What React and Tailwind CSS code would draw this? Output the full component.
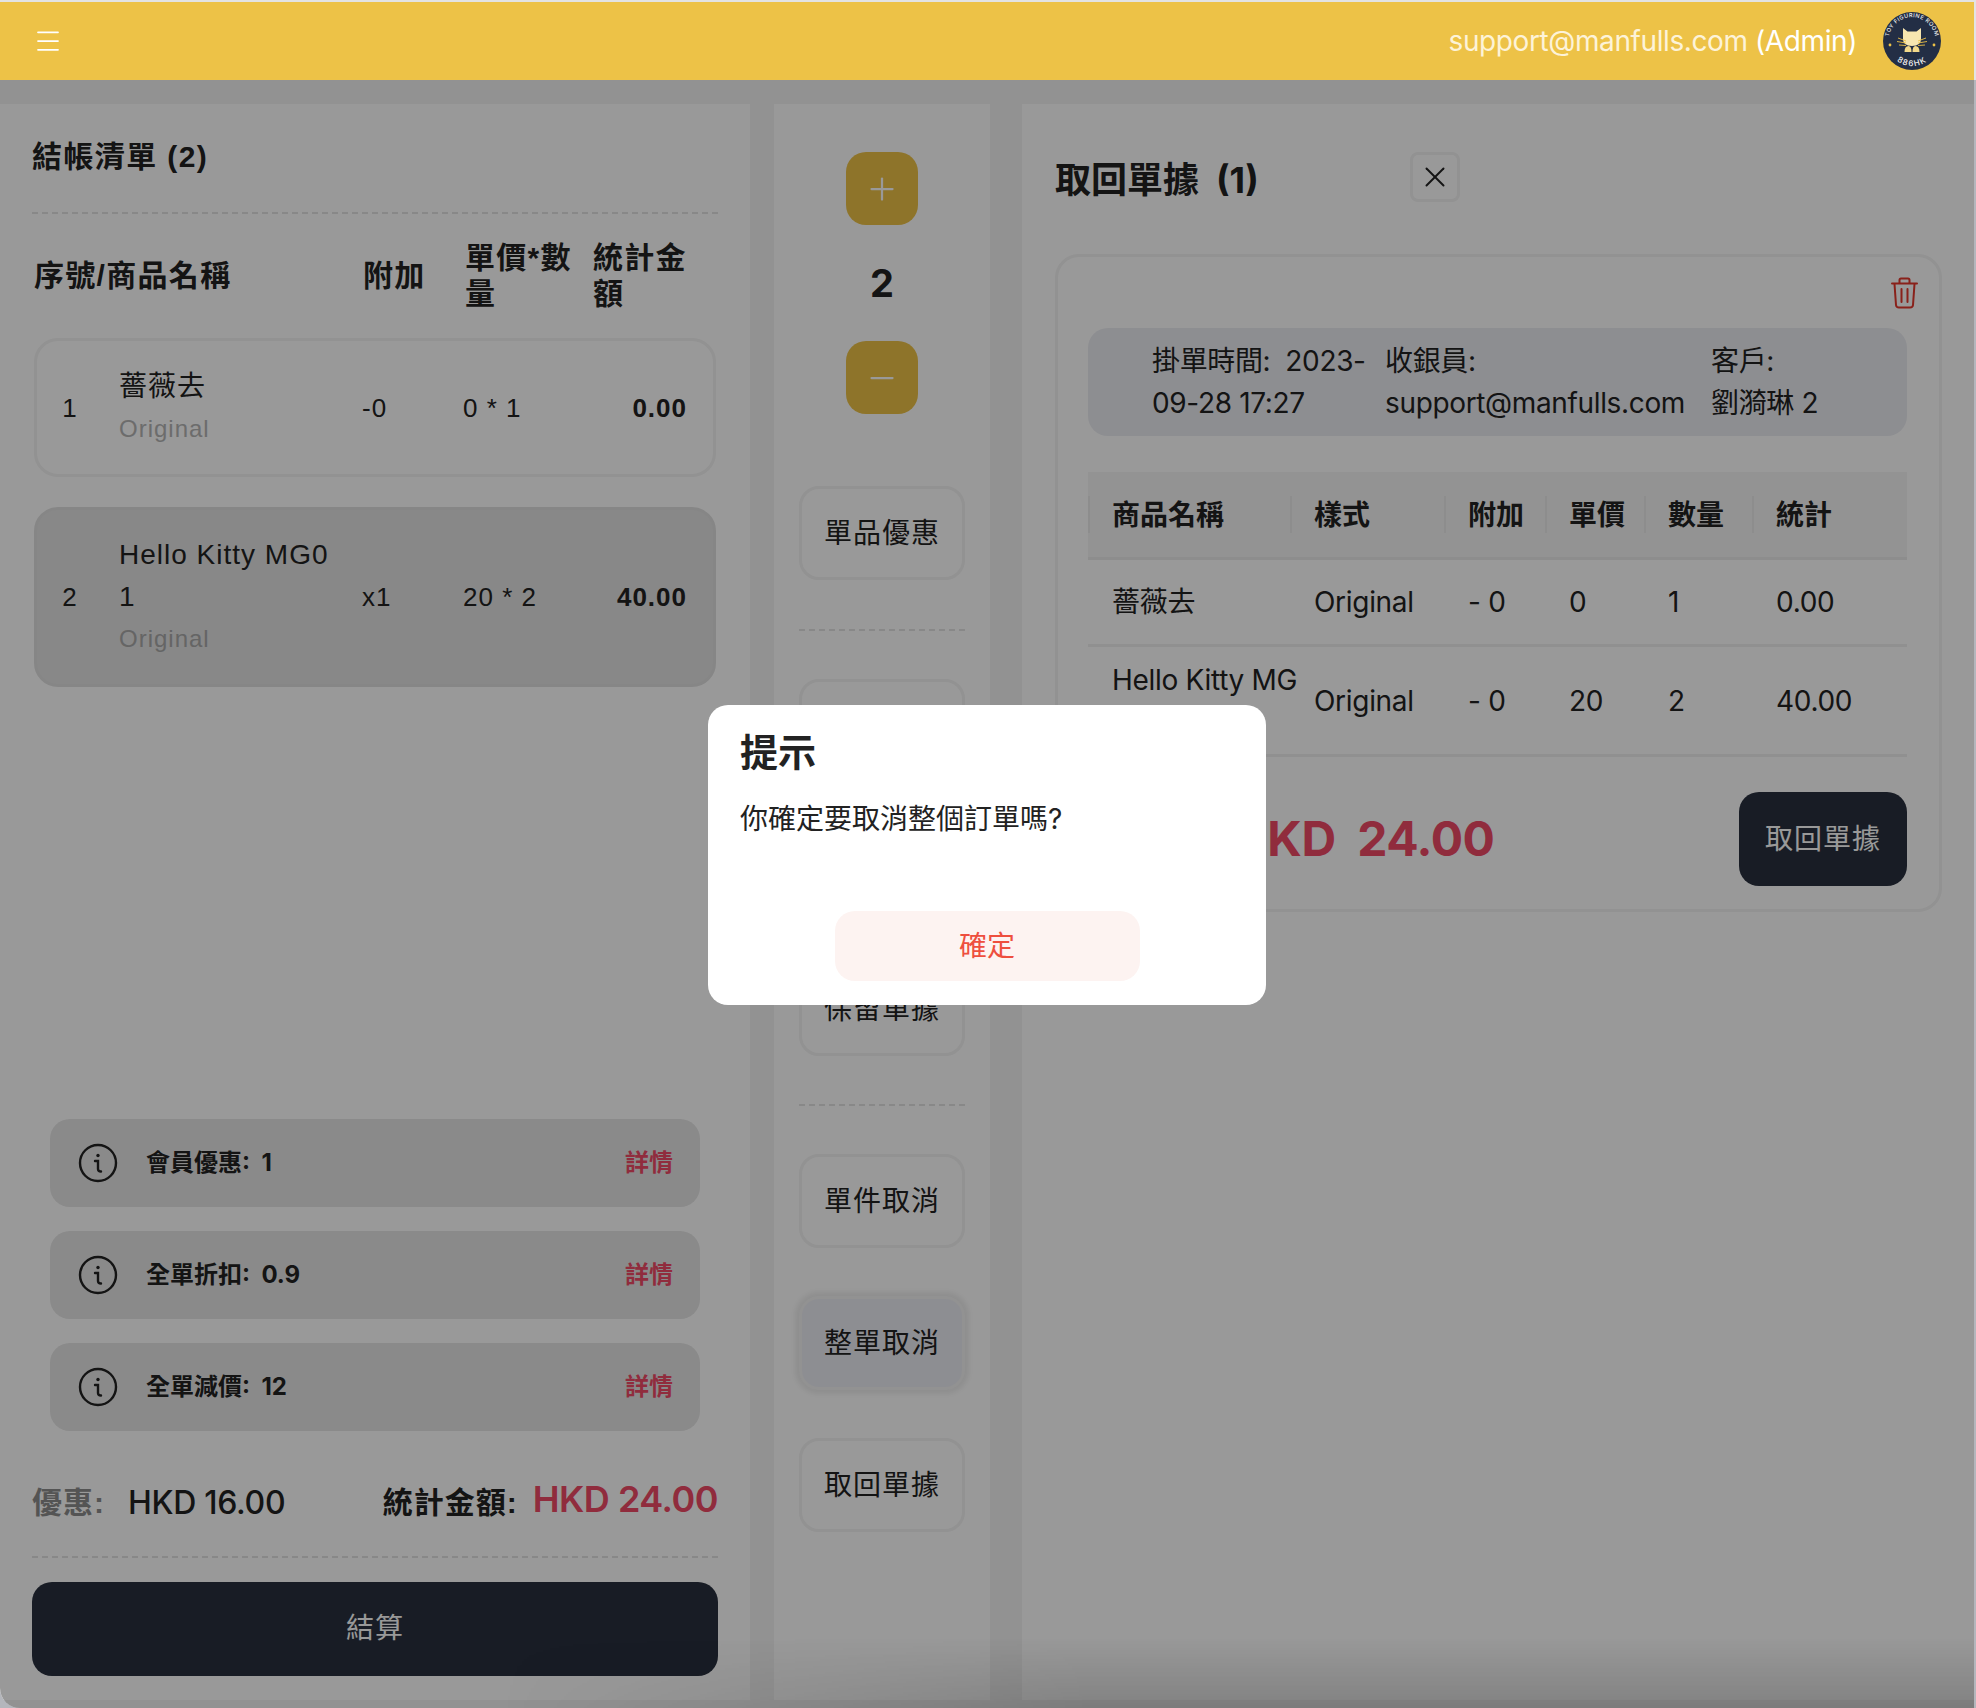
import React from 'react';
import { Menu, X, Plus, Minus } from 'lucide-react';

const sideBtn = 'w-[166px] h-[94px] rounded-[20px] border-[3px] border-[#f3f3f3] flex items-center justify-center text-[28px] tracking-[1px] text-[#222]';

const Dashed = ({ className }) => <div className={`border-t-2 border-dashed border-[#e3e3e3] ${className}`}></div>;

const Logo = () => (
    <svg width="60" height="60" viewBox="0 0 60 60">
        <defs>
            <path id="topArc" d="M7.5 37 A23.6 23.6 0 1 1 52.5 37" />
            <path id="botArc" d="M8 42 A25 25 0 0 0 52 42" />
        </defs>
        <circle cx="30" cy="30" r="29" fill="#232e45" />
        <text fontSize="5.6" fill="#f0f0f0" fontFamily="Inter, sans-serif" fontWeight="500" letterSpacing="0.45">
            <textPath href="#topArc" startOffset="50%" textAnchor="middle">TOY FIGURINE ROOM</textPath>
        </text>
        <text fontSize="8" fill="#f0f0f0" fontFamily="Inter, sans-serif" fontWeight="500" letterSpacing="1.2">
            <textPath href="#botArc" startOffset="50%" textAnchor="middle">886HK</textPath>
        </text>
        <circle cx="8" cy="34" r="1.4" fill="#edc247" />
        <circle cx="52" cy="34" r="1.4" fill="#edc247" />
        <path d="M21 17 L25.5 20.5 L34.5 20.5 L39 17 L39 28 Q39 35 30 35 Q21 35 21 28 Z" fill="#f7e6b0" />
        <path d="M22.5 41 Q22.5 35 26.5 35 Q29.5 35 29.5 41 Z M37.5 41 Q37.5 35 33.5 35 Q30.5 35 30.5 41 Z" fill="#f3d98a" />
        <path d="M16 27 L24 30 M15 30.5 L24 32 M17 34 L24 34.5 M44 27 L36 30 M45 30.5 L36 32 M43 34 L36 34.5" stroke="#edc247" strokeWidth="0.9" fill="none" />
    </svg>
);

const InfoIcon = () => (
    <svg width="40" height="40" viewBox="0 0 40 40" fill="none" stroke="#222" strokeWidth="2.4">
        <circle cx="20" cy="20" r="18" />
        <circle cx="20" cy="12.5" r="1.7" fill="#222" stroke="none" />
        <path d="M17 18 H20 V26 Q20 28.5 23 28.5" strokeLinecap="round" />
    </svg>
);

const TrashIcon = () => (
    <svg width="27" height="32" viewBox="0 0 27 32" fill="none" stroke="#e5372c" strokeWidth="2" strokeLinecap="round">
        <path d="M1 6.5 H26" />
        <path d="M8.5 6 V3 Q8.5 1.5 10 1.5 H17 Q18.5 1.5 18.5 3 V6" />
        <path d="M3.5 7 L5 28 Q5.2 30.5 8 30.5 H19 Q21.8 30.5 22 28 L23.5 7" />
        <path d="M10.5 12 V25 M16.5 12 V25" />
    </svg>
);

const Discount = ({ label }) => (
    <div className="h-[88px] rounded-[20px] bg-[#e6e6e6] flex items-center pl-[28px] pr-[27px] font-['Inter','Noto_Sans_CJK_TC',sans-serif]">
        <InfoIcon />
        <span className="ml-[28px] text-[24px] font-bold text-[#222] whitespace-pre">{label}</span>
        <span className="ml-auto text-[24px] font-bold text-[#f04a66]">詳情</span>
    </div>
);

const columns = 'grid grid-cols-[72px_253px_101px_132px_1fr]';
const tableCols = 'grid grid-cols-[202px_154px_101px_99px_108px_1fr]';

export default function App() {
    return (
        <div className="w-[1976px] h-[1708px] relative overflow-hidden bg-[#b4b6bc] font-['Inter','Noto_Sans_CJK_TC',sans-serif]">
            <div className="w-[1974px] h-[1708px] rounded-bl-[20px] overflow-hidden bg-[#f3f3f3] flex flex-col">
                <div className="h-[80px] shrink-0"></div>

                <div className="flex-1 flex pt-[24px] pb-[8px] min-h-0">
                    {/* Left: checkout list */}
                    <div className="w-[750px] shrink-0 bg-white px-[32px] flex flex-col tracking-[1px] font-['Liberation_Sans','Noto_Sans_CJK_TC',sans-serif]">
                        <h2 className="h-[106px] pb-[1px] flex items-center text-[30px] font-bold tracking-[1.4px] text-[#222]">結帳清單 (2)</h2>
                        <div className="h-[2px]"></div>
                        <Dashed />
                        <div className="grid grid-cols-[329px_102px_128px_1fr] mx-[2px] h-[124px] items-center text-[30px] leading-[36px] font-bold tracking-[1.3px] text-[#222]">
                            <div className="whitespace-nowrap">序號/商品名稱</div>
                            <div>附加</div>
                            <div className="pr-[14px]">單價*數量</div>
                            <div className="pr-[18px]">統計金額</div>
                        </div>
                        <div className={`${columns} mx-[2px] h-[139px] items-center rounded-[24px] border-[3px] border-[#f3f3f3] text-[#222] text-[26px] leading-[42px]`}>
                            <div className="text-center pr-[6px]">1</div>
                            <div className="pl-[10px]">
                                <div className="text-[28px] pt-[1px]">薔薇去</div>
                                <div className="text-[24px] text-[#b5b5b5]">Original</div>
                            </div>
                            <div>-0</div>
                            <div>0 * 1</div>
                            <div className="text-right pr-[26px] font-bold">0.00</div>
                        </div>
                        <div className={`${columns} mx-[2px] mt-[30px] h-[180px] items-center rounded-[24px] border-[3px] border-[#e0e0e0] bg-[#e3e3e3] text-[#222] text-[26px] leading-[42px]`}>
                            <div className="text-center pr-[6px]">2</div>
                            <div className="pl-[10px]">
                                <div className="w-[216px] break-all text-[28px]">Hello Kitty MG01</div>
                                <div className="text-[24px] text-[#a8a8a8]">Original</div>
                            </div>
                            <div>x1</div>
                            <div>20 * 2</div>
                            <div className="text-right pr-[26px] font-bold">40.00</div>
                        </div>

                        <div className="mt-auto mx-[18px] flex flex-col gap-[24px] tracking-normal">
                            <Discount label="會員優惠:  1" />
                            <Discount label="全單折扣:  0.9" />
                            <Discount label="全單減價:  12" />
                        </div>
                        <div className="h-[125px] pt-[18px] flex items-center text-[#222]">
                            <span className="text-[30px] font-bold text-[#8c8c8c] w-[96px]">優惠:</span>
                            <span className="text-[32px] font-medium tracking-[-0.3px] font-['Inter',sans-serif]">HKD 16.00</span>
                            <span className="ml-auto text-[30px] font-bold">統計金額:</span>
                            <span className="ml-[15px] mb-[8px] text-[36px] font-semibold tracking-[-0.5px] text-[#f04a66] font-['Inter',sans-serif]">HKD 24.00</span>
                        </div>
                        <Dashed />
                        <button className="mt-[24px] mb-[24px] h-[94px] rounded-[20px] bg-[#282f3e] text-[28px] text-white">結算</button>
                    </div>

                    {/* Middle: actions */}
                    <div className="w-[216px] shrink-0 ml-[24px] bg-white flex flex-col items-center pt-[48px]">
                        <button className="w-[72px] h-[73px] rounded-[20px] bg-[#edc247] flex items-center justify-center">
                            <Plus size={36} strokeWidth={1.5} className="text-white" />
                        </button>
                        <div className="h-[116px] flex items-center text-[38px] font-bold text-[#222]">2</div>
                        <button className="w-[72px] h-[73px] rounded-[20px] bg-[#edc247] flex items-center justify-center">
                            <Minus size={36} strokeWidth={1.5} className="text-white" />
                        </button>
                        <button className={`${sideBtn} mt-[72px]`}>單品優惠</button>
                        <Dashed className="w-[166px] mt-[49px]" />
                        <button className={`${sideBtn} mt-[48px]`}></button>
                        <button className={`${sideBtn} mt-[48px]`}></button>
                        <button className={`${sideBtn} mt-[47px]`}>保留單據</button>
                        <Dashed className="w-[166px] mt-[48px]" />
                        <button className={`${sideBtn} mt-[48px]`}>單件取消</button>
                        <button className={`${sideBtn} mt-[48px] bg-[#ecedf3] border-[#ecedf3] shadow-[0_0_5px_4px_#eeeeee]`}>整單取消</button>
                        <button className={`${sideBtn} mt-[48px]`}>取回單據</button>
                    </div>

                    {/* Right: retrieve orders */}
                    <div className="flex-1 min-w-0 ml-[32px] bg-white pl-[33px]">
                        <div className="h-[150px] flex items-center">
                            <h2 className="w-[355px] mt-[2px] text-[36px] font-bold text-[#222] whitespace-pre">取回單據  (1)</h2>
                            <button className="w-[50px] h-[50px] mb-[4px] rounded-[8px] border-[3px] border-[#f3f3f3] flex items-center justify-center">
                                <X size={34} strokeWidth={1.4} className="text-[#222]" />
                            </button>
                        </div>
                        <div className="relative w-[887px] h-[658px] rounded-[24px] border-[3px] border-[#f3f3f3] pl-[30px] pr-[32px] pt-[71px]">
                            <div className="absolute top-[20px] right-[21px]"><TrashIcon /></div>
                            <div className="h-[108px] rounded-[20px] bg-[#ecedf2] pl-[64px] grid grid-cols-[233px_326px_1fr] items-center text-[28px] leading-[42px] tracking-[-0.35px] text-[#222]">
                                <div className="whitespace-pre-wrap">掛單時間:  2023-09-28 17:27</div>
                                <div>收銀員:<br />support@manfulls.com</div>
                                <div>客戶:<br />劉漪琳 2</div>
                            </div>
                            <div className="mt-[36px] text-[28px] leading-[42px] tracking-[-0.3px] text-[#222]">
                                <div className={`${tableCols} h-[88px] bg-[#f5f5f5] border-b-[3px] border-[#ececec] items-center font-bold tracking-normal`}>
                                    {['商品名稱', '樣式', '附加', '單價', '數量', '統計'].map((h) => (
                                        <div key={h} className="h-[37px] flex items-center border-l-2 border-[#ececec] pl-[22px]">{h}</div>
                                    ))}
                                </div>
                                <div className={`${tableCols} h-[87px] border-b-[3px] border-[#f0f0f0] items-center pl-[24px]`}>
                                    <div>薔薇去</div>
                                    <div>Original</div>
                                    <div>- 0</div>
                                    <div>0</div>
                                    <div>1</div>
                                    <div>0.00</div>
                                </div>
                                <div className={`${tableCols} h-[110px] border-b-[3px] border-[#f0f0f0] items-center pl-[24px]`}>
                                    <div className="break-all pr-[6px]">Hello Kitty MG01</div>
                                    <div>Original</div>
                                    <div>- 0</div>
                                    <div>20</div>
                                    <div>2</div>
                                    <div>40.00</div>
                                </div>
                            </div>
                            <div className="mt-[35px] flex items-center justify-between">
                                <span className="ml-[144px] text-[48px] font-bold tracking-[-0.5px] text-[#f04a66] whitespace-pre">HKD  24.00</span>
                                <button className="w-[168px] h-[94px] rounded-[20px] bg-[#282f3e] text-[28px] tracking-[1px] text-white">取回單據</button>
                            </div>
                        </div>
                    </div>
                </div>
            </div>

            {/* Dimmed backdrop, header stays above it */}
            <div className="absolute inset-x-0 top-[80px] bottom-0 w-[1974px] rounded-bl-[20px] bg-black/40"></div>
            <div className="absolute bottom-0 left-[500px] w-[1474px] h-[70px] bg-gradient-to-t from-black/15 to-transparent [mask-image:linear-gradient(to_right,transparent,black_40%)]"></div>

            <div className="absolute top-0 left-0 right-0 h-[80px] bg-[#e3e3e3] pt-[2px]">
                <div className="h-[78px] mr-[2px] bg-[#edc247] flex items-center pl-[33px] pr-[32px] text-white">
                    <Menu size={30} strokeWidth={1.4} />
                    <span className="ml-auto text-[28px] tracking-[-0.4px] text-[#fdf3d8]">support@manfulls.com <span className="text-white">(Admin)</span></span>
                    <div className="ml-[25px]"><Logo /></div>
                </div>
            </div>

            {/* Confirm dialog */}
            <div className="absolute left-[708px] top-[705px] w-[558px] h-[300px] rounded-[20px] bg-white px-[32px] flex flex-col">
                <div className="mt-[22px] text-[38px] leading-[50px] font-bold text-[#222]">提示</div>
                <div className="mt-[21px] text-[28px] leading-[42px] text-[#222]">你確定要取消整個訂單嗎?</div>
                <button className="mx-auto mt-[71px] w-[305px] h-[70px] rounded-[20px] bg-[#fdf3f1] text-[28px] text-[#ee4f3e]">確定</button>
            </div>
        </div>
    );
}
